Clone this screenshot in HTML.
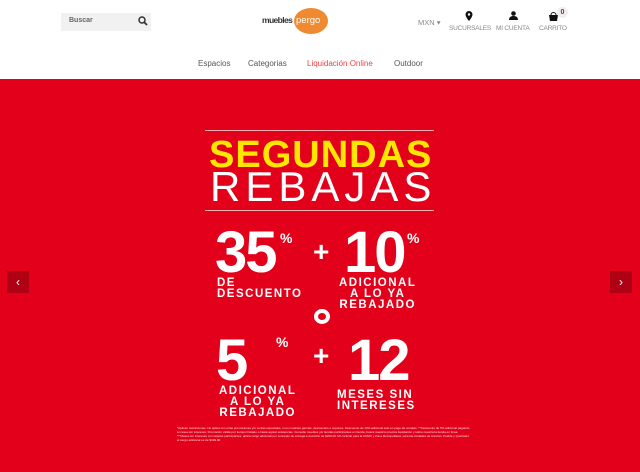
<!DOCTYPE html>
<html><head><meta charset="utf-8"><style>
*{margin:0;padding:0;box-sizing:border-box}
body{width:640px;height:472px;overflow:hidden;background:#fff;font-family:"Liberation Sans",sans-serif;position:relative}
.a{position:absolute}
.hero{position:absolute;left:0;top:79px;width:640px;height:393px;background:#e2001a}
.w{color:#fff;font-weight:bold;position:absolute;white-space:nowrap}
.s{font-size:12px;letter-spacing:1.5px;line-height:11px}
.ic{font-size:6.5px;color:#888;position:absolute;text-align:center;white-space:nowrap}
.arr{position:absolute;top:271px;width:22px;height:22px;background:rgba(0,0,0,.22);color:#fff;font-size:12px;text-align:center;line-height:22px}
</style></head><body>
<div class="a" style="left:61px;top:13px;width:90px;height:18px;background:#f1f1f1"></div>
<div class="a" style="left:69px;top:17px;font-size:7px;color:#666;font-weight:bold">Buscar</div>
<svg class="a" style="left:138px;top:16px" width="10" height="10"><circle cx="4" cy="4" r="3" stroke="#333" stroke-width="1.5" fill="none"/><line x1="6" y1="6" x2="9" y2="9" stroke="#333" stroke-width="1.8"/></svg>
<div class="a" style="left:294px;top:8px;width:34px;height:26px;border-radius:50%;background:#f08a30"></div>
<div class="a" style="left:262px;top:15px;font-size:8.5px;font-weight:bold;color:#333;letter-spacing:-.6px">muebles</div>
<div class="a" style="left:296px;top:15px;font-size:9.5px;color:#fff">pergo</div>
<div class="ic" style="left:418px;top:18px;font-size:7.5px">MXN ▾</div>
<svg class="a" style="left:465px;top:11px" width="8" height="10"><path d="M4 0a3.5 3.5 0 0 1 3.5 3.5C7.5 6 4 10 4 10S.5 6 .5 3.5A3.5 3.5 0 0 1 4 0z" fill="#111"/><circle cx="4" cy="3.5" r="1.2" fill="#fff"/></svg>
<div class="ic" style="left:449px;top:25px;letter-spacing:-.2px">SUCURSALES</div>
<svg class="a" style="left:509px;top:11px" width="9" height="9"><circle cx="4.5" cy="2.5" r="2.3" fill="#111"/><path d="M0 9c0-3 2-4 4.5-4S9 6 9 9z" fill="#111"/></svg>
<div class="ic" style="left:496px;top:25px;letter-spacing:-.2px">MI CUENTA</div>
<svg class="a" style="left:549px;top:12px" width="9" height="9"><path d="M0 3h9l-1 6H1z" fill="#111"/><path d="M2 3a2.5 2.5 0 0 1 5 0" stroke="#111" fill="none"/></svg>
<div class="a" style="left:557px;top:7px;width:11px;height:11px;border-radius:50%;background:#eee;color:#e2001a;font-size:7px;font-weight:bold;text-align:center;line-height:11px">0</div>
<div class="ic" style="left:539px;top:25px;letter-spacing:-.2px">CARRITO</div>
<div class="a" style="left:198px;top:59px;font-size:8px;color:#555">Espacios</div>
<div class="a" style="left:248px;top:59px;font-size:8px;color:#555">Categorias</div>
<div class="a" style="left:307px;top:59px;font-size:8px;color:#ee4444">Liquidación Online</div>
<div class="a" style="left:394px;top:59px;font-size:8px;color:#555">Outdoor</div>
<div class="hero"></div>
<div class="a" style="left:205px;top:130px;width:229px;height:1px;background:#f4b0b0"></div>
<div class="w" style="left:209px;top:134px;font-size:38px;color:#ffe600;letter-spacing:1px;line-height:42px">SEGUNDAS</div>
<div class="w" style="left:210px;top:166px;font-size:42px;font-weight:normal;letter-spacing:5px;line-height:42px">REBAJAS</div>
<div class="a" style="left:205px;top:210px;width:229px;height:1px;background:#f4b0b0"></div>
<div class="w" style="left:215px;top:224px;font-size:58px;letter-spacing:-2px;line-height:58px">35</div>
<div class="w" style="left:280px;top:230px;font-size:14px">%</div>
<div class="w" style="left:313px;top:236px;font-size:28px">+</div>
<div class="w" style="left:344px;top:224px;font-size:58px;letter-spacing:-2px;line-height:58px">10</div>
<div class="w" style="left:407px;top:230px;font-size:14px">%</div>
<div class="w s" style="left:217px;top:278px;font-size:11.5px">DE<br>DESCUENTO</div>
<div class="w s" style="left:339px;top:278px;text-align:center;font-size:11.5px">ADICIONAL<br>A LO YA<br>REBAJADO</div>
<div class="a" style="left:314px;top:309px;width:16px;height:15px;border:4px solid #fff;border-radius:50%"></div>
<div class="w" style="left:216px;top:332px;font-size:58px;line-height:58px">5</div>
<div class="w" style="left:276px;top:334px;font-size:14px">%</div>
<div class="w" style="left:313px;top:340px;font-size:28px">+</div>
<div class="w" style="left:348px;top:332px;font-size:58px;letter-spacing:-2px;line-height:58px">12</div>
<div class="w s" style="left:219px;top:386px;text-align:center;font-size:11.5px">ADICIONAL<br>A LO YA<br>REBAJADO</div>
<div class="w s" style="left:337px;top:390px;font-size:11.5px">MESES SIN<br>INTERESES</div>
<div class="a" style="left:177px;top:426px;width:294px;color:#fff;font-size:3px;line-height:4px;opacity:.85">*Aplican restricciones. No aplica con otras promociones y/o ventas especiales, ni en muebles garcías, descuentos o cupones. Descuento de 10% adicional sólo en pago de contado. **Descuento de 5% adicional pagando a meses sin intereses. Promoción válida por tiempo limitado o hasta agotar existencias. Consulte muebles y/o tiendas participantes en tienda, busca nuestros precios liquidación y sobre nuestra la tienda en línea. ***Meses sin intereses con tarjetas participantes, aplica cargo adicional por concepto de entrega a domicilio de $299.00 IVA incluido para la CDMX y Zona Metropolitana, para las ciudades de Cancún, Puebla y Querétaro el cargo adicional es de $499.00.</div>
<div class="arr" style="left:7px">‹</div>
<div class="arr" style="left:610px">›</div>
</body></html>
